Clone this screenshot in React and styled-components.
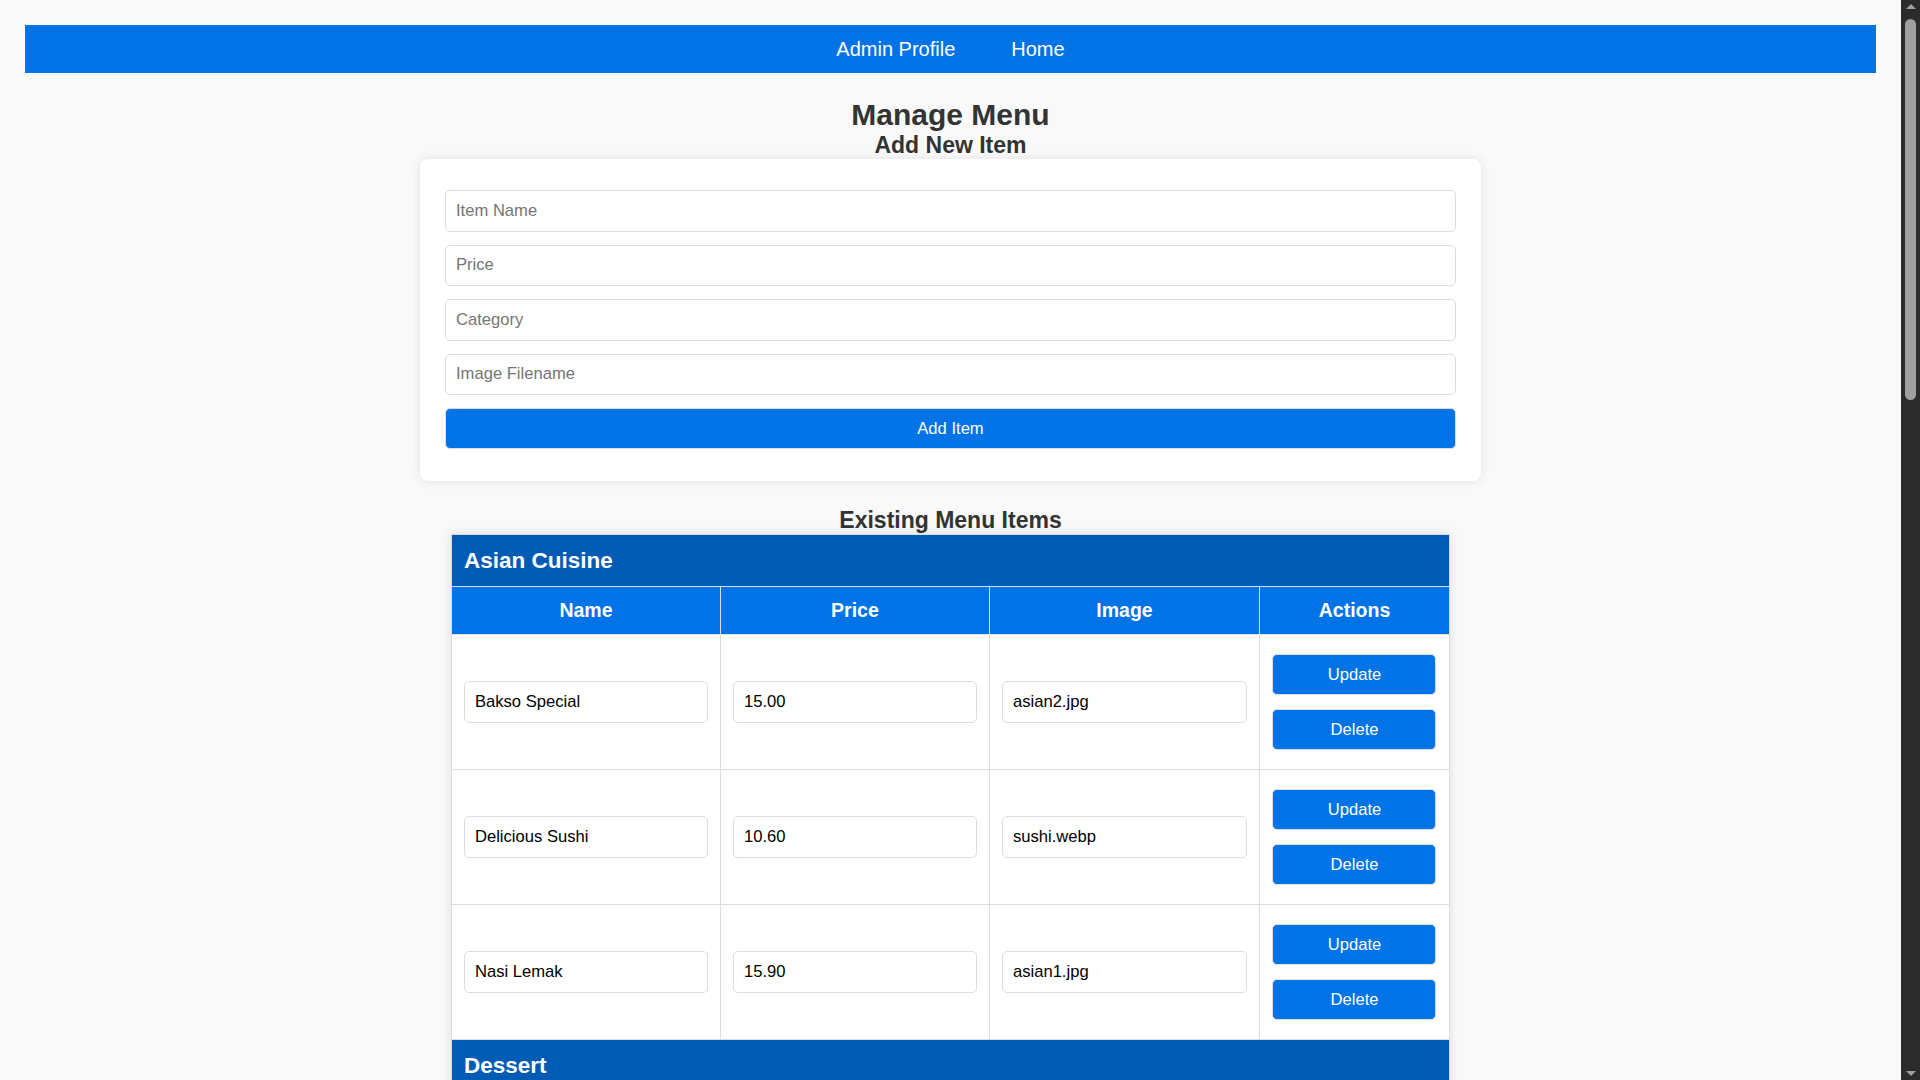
import React from "react";
import styled, { createGlobalStyle } from "styled-components";

const GlobalStyle = createGlobalStyle`
  body {
    margin: 0;
    background: #f9f9f9;
    font-family: "Liberation Sans", Arial, sans-serif;
    color: #333;
  }
`;

const menu = [
  {
    category: "Asian Cuisine",
    items: [
      { name: "Bakso Special", price: "15.00", image: "asian2.jpg" },
      { name: "Delicious Sushi", price: "10.60", image: "sushi.webp" },
      { name: "Nasi Lemak", price: "15.90", image: "asian1.jpg" },
    ],
  },
  {
    category: "Dessert",
    items: [
      { name: "Chocolate Lava Cake", price: "8.50", image: "dessert1.jpg" },
      { name: "Mango Sticky Rice", price: "7.20", image: "dessert2.jpg" },
      { name: "Tiramisu", price: "9.00", image: "tiramisu.jpg" },
      { name: "Ice Cream Sundae", price: "6.50", image: "sundae.webp" },
    ],
  },
  {
    category: "Western",
    items: [
      { name: "Grilled Chicken Chop", price: "18.90", image: "western1.jpg" },
      { name: "Spaghetti Carbonara", price: "16.50", image: "western2.jpg" },
      { name: "Beef Burger", price: "14.00", image: "burger.jpg" },
      { name: "Fish and Chips", price: "17.80", image: "fish.webp" },
    ],
  },
  {
    category: "Drinks",
    items: [
      { name: "Iced Lemon Tea", price: "4.50", image: "drink1.jpg" },
      { name: "Teh Tarik", price: "3.80", image: "drink2.jpg" },
      { name: "Fresh Orange Juice", price: "6.00", image: "orange.jpg" },
    ],
  },
];

const Page = styled.div`
  box-sizing: border-box;
  width: 1901px;
  padding: 25px;
`;

// stand-in for the browser's dark scrollbar seen in the screenshot
const ScrollTrack = styled.div`
  position: fixed;
  top: 0;
  right: 0;
  bottom: 0;
  width: 19px;
  background: #2b2b2b;
  display: flex;
  flex-direction: column;
  align-items: center;
  padding: 4px 0;
  box-sizing: border-box;
`;

const ScrollArrow = styled.div`
  width: 0;
  height: 0;
  border-left: 5px solid transparent;
  border-right: 5px solid transparent;
  ${(p) =>
    p.$down
      ? "border-top: 5px solid #9f9f9f; margin-top: auto;"
      : "border-bottom: 5px solid #9f9f9f;"}
`;

const ScrollThumb = styled.div`
  width: 11px;
  height: 381px;
  margin-top: 10px;
  border-radius: 6px;
  background: #9f9f9f;
`;

const NavBar = styled.nav`
  display: flex;
  justify-content: center;
  align-items: center;
  height: 48px;
  background: #0073e6;
`;

const NavLink = styled.a`
  margin: 0 28px;
  color: #fff;
  font-size: 20px;
  text-decoration: none;
  cursor: pointer;
`;

const Main = styled.main`
  display: flex;
  flex-direction: column;
  align-items: center;
`;

const Title = styled.h1`
  margin: 25px 0 0;
  font-size: 30px;
  line-height: 34px;
  color: #333;
`;

const SubTitle = styled.h2`
  margin: ${(p) => (p.$spaced ? "26px 0 1px" : "0")};
  font-size: 23px;
  line-height: 26px;
  color: #333;
`;

const FormCard = styled.form`
  box-sizing: border-box;
  width: 1061px;
  margin-top: 1px;
  padding: 31px 25px 32px;
  display: flex;
  flex-direction: column;
  gap: 13px;
  background: #fff;
  border-radius: 8px;
  box-shadow: 0 0 10px rgba(0, 0, 0, 0.1);
`;

const TextInput = styled.input`
  box-sizing: border-box;
  width: 100%;
  height: 41.5px;
  padding: 0 10px;
  border: 1px solid #ddd;
  border-radius: 5px;
  background: #fff;
  font-family: "Liberation Sans", Arial, sans-serif;
  font-size: 16.6px;
  color: #000;
  outline: none;

  &::placeholder {
    color: #757575;
  }
`;

const Button = styled.button`
  box-sizing: border-box;
  width: ${(p) => (p.$compact ? "164px" : "100%")};
  height: 41px;
  border: 1px solid #ddd;
  border-radius: 5px;
  background: #0073e6;
  color: #fff;
  font-family: "Liberation Sans", Arial, sans-serif;
  font-size: 16.6px;
  cursor: pointer;
`;

const Table = styled.table`
  width: 998px;
  table-layout: fixed;
  border-collapse: collapse;
  background: #fff;
  box-shadow: 0 0 10px rgba(0, 0, 0, 0.1);
`;

const CategoryCell = styled.th`
  height: 51px;
  padding: 0 12px;
  border: 1px solid #ddd;
  background: #005bb5;
  color: #fff;
  font-size: 22.5px;
  text-align: left;
`;

const HeadCell = styled.th`
  height: 47px;
  padding: 0 12px;
  border: 1px solid #ddd;
  background: #0073e6;
  color: #fff;
  font-size: 19.5px;
  text-align: center;
`;

const Cell = styled.td`
  height: 134px;
  padding: 0 12px;
  border: 1px solid #ddd;
  vertical-align: middle;
`;

const Actions = styled.div`
  display: flex;
  flex-direction: column;
  align-items: center;
  gap: 14px;
`;

const App = () => {
  return (
    <>
      <GlobalStyle />
      <Page>
        <NavBar>
          <NavLink>Admin Profile</NavLink>
          <NavLink>Home</NavLink>
        </NavBar>
        <Main>
          <Title>Manage Menu</Title>
          <SubTitle>Add New Item</SubTitle>
          <FormCard onSubmit={(e) => e.preventDefault()}>
            <TextInput placeholder="Item Name" />
            <TextInput placeholder="Price" />
            <TextInput placeholder="Category" />
            <TextInput placeholder="Image Filename" />
            <Button type="submit">Add Item</Button>
          </FormCard>

          <SubTitle $spaced>Existing Menu Items</SubTitle>
          <Table>
            <colgroup>
              <col style={{ width: 269 }} />
              <col style={{ width: 269 }} />
              <col style={{ width: 270 }} />
              <col style={{ width: 190 }} />
            </colgroup>
            {menu.map((group) => (
              <tbody key={group.category}>
                <tr>
                  <CategoryCell colSpan={4}>{group.category}</CategoryCell>
                </tr>
                <tr>
                  <HeadCell>Name</HeadCell>
                  <HeadCell>Price</HeadCell>
                  <HeadCell>Image</HeadCell>
                  <HeadCell>Actions</HeadCell>
                </tr>
                {group.items.map((item) => (
                  <tr key={item.name}>
                    <Cell>
                      <TextInput defaultValue={item.name} />
                    </Cell>
                    <Cell>
                      <TextInput defaultValue={item.price} />
                    </Cell>
                    <Cell>
                      <TextInput defaultValue={item.image} />
                    </Cell>
                    <Cell>
                      <Actions>
                        <Button $compact>Update</Button>
                        <Button $compact>Delete</Button>
                      </Actions>
                    </Cell>
                  </tr>
                ))}
              </tbody>
            ))}
          </Table>
        </Main>
      </Page>
      <ScrollTrack>
        <ScrollArrow />
        <ScrollThumb />
        <ScrollArrow $down />
      </ScrollTrack>
    </>
  );
};

export default App;
